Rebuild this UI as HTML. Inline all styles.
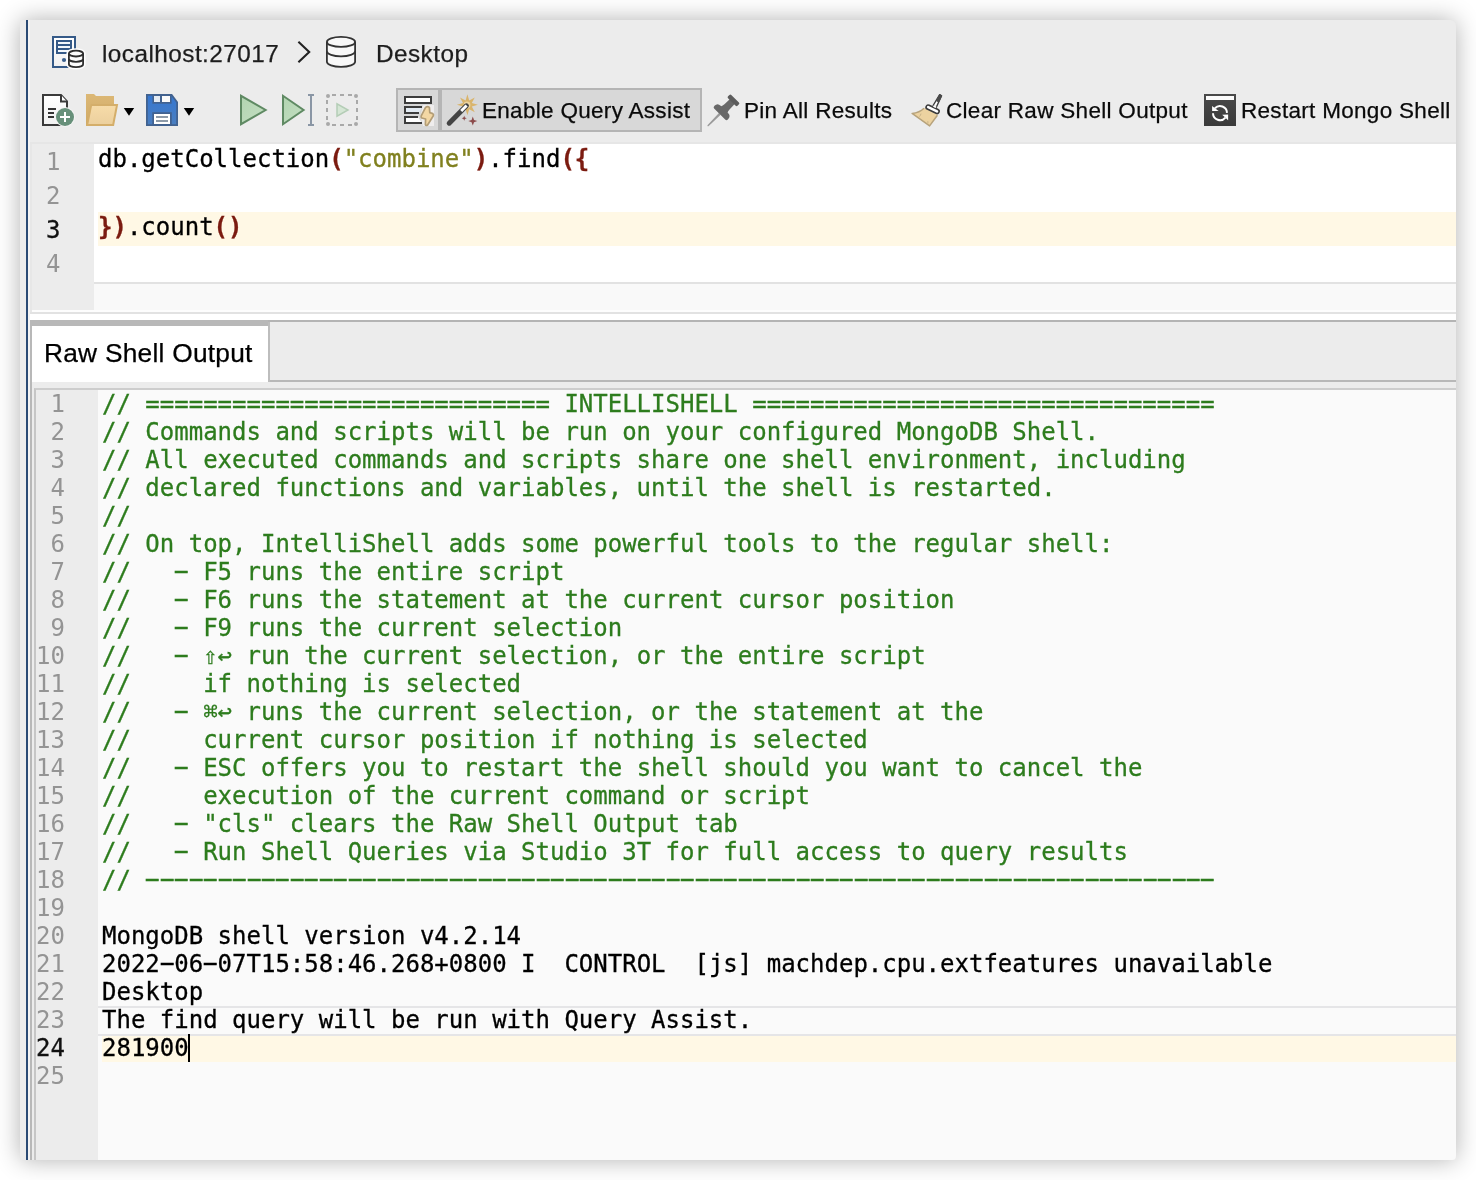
<!DOCTYPE html>
<html lang="en">
<head>
<meta charset="utf-8">
<title>Studio 3T IntelliShell</title>
<style>
*{box-sizing:border-box;margin:0;padding:0}
html,body{width:1476px;height:1180px;background:#fff;overflow:hidden}
body{position:relative;font-family:"Liberation Sans","DejaVu Sans",sans-serif;color:#1b1b1b}
.abs{position:absolute}
#win{position:absolute;left:20px;top:20px;width:1436px;height:1140px;background:#ececec;border-radius:4px 6px 4px 4px;
  box-shadow:0 0 24px rgba(0,0,0,.31);overflow:hidden}
#win{will-change:transform}
#strip{position:absolute;left:0;top:0;width:6px;height:100%;background:#ececec}
#blue{position:absolute;left:6px;top:0;width:2px;height:100%;background:#2a4a74}
.ui{font-size:24.3px;line-height:30px;white-space:nowrap;color:#1d1d1d;letter-spacing:.47px;-webkit-text-stroke:.25px #1d1d1d}
.tb{font-size:22.5px;line-height:30px;white-space:nowrap;color:#0a0a0a;letter-spacing:.3px;-webkit-text-stroke:.25px #0a0a0a}
.mono{font-family:"DejaVu Sans Mono","Liberation Mono",monospace;font-size:24px;white-space:pre;-webkit-text-stroke:.3px}
/* editor */
#edtop{position:absolute;left:10px;top:122px;width:1426px;height:2px;background:#e6e6e6}
#edcode{position:absolute;left:74px;top:124px;width:1362px;height:138px;background:#fff}
#edhl{position:absolute;left:78px;top:192px;width:1358px;height:34px;background:#fff8e5}
#edsep{position:absolute;left:74px;top:262px;width:1362px;height:2px;background:#e2e2e2}
#edbot{position:absolute;left:74px;top:264px;width:1362px;height:26px;background:#f9f9f9}
#edline2{position:absolute;left:12px;top:290px;width:1424px;height:2px;background:#fdfdfd}
#edline3{position:absolute;left:10px;top:292px;width:1426px;height:2px;background:#e2e2e2}
#edwhite{position:absolute;left:10px;top:294px;width:1426px;height:6px;background:#fff}
#edL{position:absolute;left:10px;top:124px;width:2px;height:168px;background:#e7e7e7}
#lite{position:absolute;left:8px;top:0;width:2px;height:100%;background:#f3f3f3}
.eln{position:absolute;left:26px;width:16px;height:34px;line-height:36px;color:#949494;text-align:left;-webkit-text-stroke:0}
.el{position:absolute;left:78px;height:34px;line-height:31px;color:#000}
.br{color:#7b1b10;font-weight:bold}
.st{color:#80801f}
/* tabs */
#tabtop{position:absolute;left:10px;top:300px;width:1426px;height:2px;background:#b4b4b4}
#tabbot{position:absolute;left:248px;top:360px;width:1188px;height:2px;background:#b8b8b8}
#tabL{position:absolute;left:10px;top:300px;width:2px;height:840px;background:#b8b8b8}
#tab{position:absolute;left:12px;top:300px;width:236px;height:62px;background:#fff;border-top:6px solid #b8b8b8}
#tabR{position:absolute;left:248px;top:302px;width:2px;height:60px;background:#bdbdbd}
#tabtxt{position:absolute;left:24px;top:318px;font-size:26.3px;line-height:30px;color:#000;white-space:nowrap;letter-spacing:.25px;-webkit-text-stroke:.25px #000}
/* output */
#out{position:absolute;left:14px;top:368px;width:1422px;height:772px;background:#fafafa;border-left:2px solid #c6c6c6;border-top:2px solid #cdcdcd}
#gut{position:absolute;left:0;top:0;width:62px;height:770px;background:#ececec}
#ohl{position:absolute;left:66px;top:645px;width:1354px;height:27px;background:#fff8e5}
.sep{position:absolute;left:62px;width:1358px;height:2px;background:#e5e5e7}
#lnums{position:absolute;left:0;top:0;width:62px}
#lnums div{height:28px;line-height:28px;color:#949494;-webkit-text-stroke:0;text-align:right;padding-right:33px;letter-spacing:0}
#lines{position:absolute;left:66px;top:0}
#lines div{height:28px;line-height:28px;color:#000}
.c{color:#2d7c1d}
.h{display:inline-block;transform:translateY(-1.4px) scaleX(2.03)}
#caret{position:absolute;left:152px;top:644px;width:2px;height:28px;background:#000}
</style>
</head>
<body>
<div id="win">
  <div id="strip"></div><div id="blue"></div>
  <!-- breadcrumb -->
  <div class="abs ui" style="left:82px;top:19px">localhost:27017</div>
  <div class="abs ui" style="left:356px;top:19px">Desktop</div>
  <!-- toolbar -->
  <div class="abs" style="left:376px;top:68px;width:306px;height:44px;background:#d8d8d8;border:2px solid #b5b5b5"></div><div class="abs" style="left:418px;top:68px;width:4px;height:44px;background:#b5b5b5"></div>
  <div class="abs tb" style="left:462px;top:76px">Enable Query Assist</div>
  <div class="abs tb" style="left:724px;top:76px">Pin All Results</div>
  <div class="abs tb" style="left:926px;top:76px">Clear Raw Shell Output</div>
  <div class="abs tb" style="left:1221px;top:76px">Restart Mongo Shell</div>
  <!-- editor -->
  <div id="edtop"></div><div id="edcode"></div><div id="edhl"></div><div id="edsep"></div><div id="edbot"></div><div id="edline2"></div><div id="edline3"></div><div id="edwhite"></div><div id="edL"></div><div id="lite"></div>
  <div class="eln mono" style="top:124px">1</div>
  <div class="eln mono" style="top:158px">2</div>
  <div class="eln mono" style="top:192px;color:#111;-webkit-text-stroke:.3px">3</div>
  <div class="eln mono" style="top:226px">4</div>
  <div class="el mono" style="top:124px">db.getCollection<span class="br">(</span><span class="st">"combine"</span><span class="br">)</span>.find<span class="br">({</span></div>
  <div class="el mono" style="top:192px"><span class="br">})</span>.count<span class="br">()</span></div>
  <!-- tabs -->
  <div id="tabtop"></div><div id="tabbot"></div><div id="tabL"></div><div id="tab"></div><div id="tabR"></div>
  <div id="tabtxt">Raw Shell Output</div>
  <!-- output -->
  <div id="out">
    <div id="gut"></div>
    <div id="ohl"></div>
    <div class="sep" style="top:616px"></div>
    <div class="sep" style="top:644px"></div>
    <div id="lnums" class="mono"><div>1</div><div>2</div><div>3</div><div>4</div><div>5</div><div>6</div><div>7</div><div>8</div><div>9</div><div>10</div><div>11</div><div>12</div><div>13</div><div>14</div><div>15</div><div>16</div><div>17</div><div>18</div><div>19</div><div>20</div><div>21</div><div>22</div><div>23</div><div style="color:#111;-webkit-text-stroke:.3px">24</div><div>25</div></div>
    <div id="lines" class="mono"><div><span class="c">// ============================ INTELLISHELL ================================</span></div><div><span class="c">// Commands and scripts will be run on your configured MongoDB Shell.</span></div><div><span class="c">// All executed commands and scripts share one shell environment, including</span></div><div><span class="c">// declared functions and variables, until the shell is restarted.</span></div><div><span class="c">//</span></div><div><span class="c">// On top, IntelliShell adds some powerful tools to the regular shell:</span></div><div><span class="c">//   <span class="h">-</span> F5 runs the entire script</span></div><div><span class="c">//   <span class="h">-</span> F6 runs the statement at the current cursor position</span></div><div><span class="c">//   <span class="h">-</span> F9 runs the current selection</span></div><div><span class="c">//   <span class="h">-</span> ⇧↩ run the current selection, or the entire script</span></div><div><span class="c">//     if nothing is selected</span></div><div><span class="c">//   <span class="h">-</span> ⌘↩ runs the current selection, or the statement at the</span></div><div><span class="c">//     current cursor position if nothing is selected</span></div><div><span class="c">//   <span class="h">-</span> ESC offers you to restart the shell should you want to cancel the</span></div><div><span class="c">//     execution of the current command or script</span></div><div><span class="c">//   <span class="h">-</span> "cls" clears the Raw Shell Output tab</span></div><div><span class="c">//   <span class="h">-</span> Run Shell Queries via Studio 3T for full access to query results</span></div><div><span class="c">// <span class="h">-</span><span class="h">-</span><span class="h">-</span><span class="h">-</span><span class="h">-</span><span class="h">-</span><span class="h">-</span><span class="h">-</span><span class="h">-</span><span class="h">-</span><span class="h">-</span><span class="h">-</span><span class="h">-</span><span class="h">-</span><span class="h">-</span><span class="h">-</span><span class="h">-</span><span class="h">-</span><span class="h">-</span><span class="h">-</span><span class="h">-</span><span class="h">-</span><span class="h">-</span><span class="h">-</span><span class="h">-</span><span class="h">-</span><span class="h">-</span><span class="h">-</span><span class="h">-</span><span class="h">-</span><span class="h">-</span><span class="h">-</span><span class="h">-</span><span class="h">-</span><span class="h">-</span><span class="h">-</span><span class="h">-</span><span class="h">-</span><span class="h">-</span><span class="h">-</span><span class="h">-</span><span class="h">-</span><span class="h">-</span><span class="h">-</span><span class="h">-</span><span class="h">-</span><span class="h">-</span><span class="h">-</span><span class="h">-</span><span class="h">-</span><span class="h">-</span><span class="h">-</span><span class="h">-</span><span class="h">-</span><span class="h">-</span><span class="h">-</span><span class="h">-</span><span class="h">-</span><span class="h">-</span><span class="h">-</span><span class="h">-</span><span class="h">-</span><span class="h">-</span><span class="h">-</span><span class="h">-</span><span class="h">-</span><span class="h">-</span><span class="h">-</span><span class="h">-</span><span class="h">-</span><span class="h">-</span><span class="h">-</span><span class="h">-</span><span class="h">-</span></span></div><div>&nbsp;</div><div>MongoDB shell version v4.2.14</div><div>2022<span class="h">-</span>06<span class="h">-</span>07T15:58:46.268+0800 I  CONTROL  [js] machdep.cpu.extfeatures unavailable</div><div>Desktop</div><div>The find query will be run with Query Assist.</div><div>281900</div><div>&nbsp;</div></div>
    <div id="caret"></div>
  </div>
</div>
<svg id="icons" width="1476" height="140" viewBox="0 0 1476 140" style="position:absolute;left:0;top:0">
  <defs>
    <linearGradient id="gDoc" x1="0" y1="0" x2="0" y2="1"><stop offset="0" stop-color="#ffffff"/><stop offset="1" stop-color="#f1f1f1"/></linearGradient>
    <linearGradient id="gFoldB" x1="0" y1="0" x2="0" y2="1"><stop offset="0" stop-color="#dcb876"/><stop offset="1" stop-color="#cfa966"/></linearGradient>
    <linearGradient id="gFoldF" x1="0" y1="0" x2="0" y2="1"><stop offset="0" stop-color="#f6dba8"/><stop offset="1" stop-color="#ecd09e"/></linearGradient>
    <linearGradient id="gSave" x1="0" y1="0" x2="0" y2="1"><stop offset="0" stop-color="#3577d2"/><stop offset="1" stop-color="#4a7ebf"/></linearGradient>
    <linearGradient id="gPlay" x1="0" y1="0" x2="1" y2="1"><stop offset="0" stop-color="#b2d4b1"/><stop offset="1" stop-color="#c4dfc2"/></linearGradient>
    <linearGradient id="gDark" x1="0" y1="0" x2="0" y2="1"><stop offset="0" stop-color="#4a4a4a"/><stop offset="1" stop-color="#3a3a3a"/></linearGradient>
  </defs>
  <!-- server + db icon -->
  <g>
    <rect x="53" y="37" width="22" height="30" fill="url(#gDoc)" stroke="#355a88" stroke-width="2"/>
    <rect x="57" y="41" width="14" height="12" fill="#f3f8fc" stroke="#355a88" stroke-width="2"/>
    <rect x="57" y="44" width="14" height="2" fill="#355a88"/>
    <rect x="57" y="48" width="14" height="2" fill="#355a88"/>
    <circle cx="64" cy="60" r="2.1" fill="#3a5f8c"/>
    <path d="M68.9 53.6 A7.1 2.9 0 0 1 83.1 53.6 V64.2 A7.1 2.9 0 0 1 68.9 64.2 Z" fill="#fdfdfd" stroke="#fdfdfd" stroke-width="5"/>
    <path d="M68.9 53.6 A7.1 2.9 0 0 1 83.1 53.6 V64.2 A7.1 2.9 0 0 1 68.9 64.2 Z" fill="#fcfcfc" stroke="#2e2e2e" stroke-width="1.8"/>
    <path d="M68.9 53.6 A7.1 2.9 0 0 0 83.1 53.6 M68.9 58.9 A7.1 2.9 0 0 0 83.1 58.9" fill="none" stroke="#2e2e2e" stroke-width="1.8"/>
  </g>
  <!-- chevron -->
  <polyline points="298.4,41.8 309.2,52 298.4,62.2" fill="none" stroke="#222" stroke-width="2.1"/>
  <!-- db icon -->
  <g fill="#f8f8f8" stroke="#333" stroke-width="1.8">
    <path d="M326.9 41.9 A14.1 5 0 0 1 355.1 41.9 V61.8 A14.1 5 0 0 1 326.9 61.8 Z"/>
    <path d="M326.9 41.9 A14.1 5 0 0 0 355.1 41.9 M326.9 51.3 A14.1 5 0 0 0 355.1 51.3" fill="none"/>
  </g>
  <!-- new doc -->
  <g>
    <path d="M43 95 H61 L67 101.5 V125 H43 Z" fill="url(#gDoc)" stroke="#3a3a3a" stroke-width="2" stroke-linejoin="miter"/>
    <path d="M61 95 V101.5 H67" fill="#fff" stroke="#3a3a3a" stroke-width="2"/>
    <rect x="48" y="108" width="8" height="2" fill="#333"/>
    <rect x="48" y="112" width="6" height="2" fill="#333"/>
    <rect x="48" y="116" width="6" height="2" fill="#333"/>
    <circle cx="65" cy="117" r="10" fill="#f4f4f4"/>
    <circle cx="65" cy="117" r="9" fill="#67907a"/>
    <rect x="60" y="116" width="10" height="2" fill="#fff"/>
    <rect x="64" y="112" width="2" height="10" fill="#fff"/>
  </g>
  <!-- folder -->
  <g>
    <path d="M86 94 H94 L96 96 H114 V126 H86 Z" fill="url(#gFoldB)"/>
    <path d="M90.8 104 H118.2 L114 126 H86 Z" fill="#d4ae6a"/>
    <path d="M92 106 H115.8 L112.3 124 H88.4 Z" fill="url(#gFoldF)"/>
  </g>
  <polygon points="123.8,108 134.2,108 129,115.8" fill="#000"/>
  <!-- save -->
  <g>
    <path d="M146.9 94.9 H171.6 L177.1 102.2 V125.1 H146.9 Z" fill="url(#gSave)" stroke="#42628f" stroke-width="1.8"/>
    <rect x="152.4" y="94" width="19.2" height="9.7" fill="#42628f"/>
    <rect x="154" y="96" width="6" height="6" fill="#e4ebf3"/>
    <rect x="162" y="96" width="8" height="6" fill="#fafafa"/>
    <rect x="152.3" y="112.2" width="19.5" height="13.8" fill="#42628f"/>
    <rect x="154" y="114" width="16" height="10" fill="#fff"/>
    <rect x="156" y="116" width="12" height="2" fill="#8d9aa8"/>
    <rect x="156" y="120" width="12" height="2" fill="#8d9aa8"/>
  </g>
  <polygon points="183.8,108 194.2,108 189,115.8" fill="#000"/>
  <!-- play -->
  <polygon points="241,95.8 241,124.2 265.6,110" fill="url(#gPlay)" stroke="#5f8a63" stroke-width="2"/>
  <!-- play step -->
  <polygon points="283,95.8 283,124.2 303.6,110" fill="url(#gPlay)" stroke="#5f8a63" stroke-width="2"/>
  <g fill="#8a96a5"><rect x="310" y="94" width="2" height="32"/><rect x="308" y="94" width="6" height="2"/><rect x="308" y="124" width="6" height="2"/></g>
  <!-- dashed box play -->
  <g fill="#a9a9a9">
    <circle cx="328" cy="96" r="2"/><circle cx="356" cy="96" r="2"/><circle cx="328" cy="124" r="2"/><circle cx="356" cy="124" r="2"/>
    <rect x="332" y="94" width="4" height="2"/><rect x="340" y="94" width="4" height="2"/><rect x="348" y="94" width="4" height="2"/>
    <rect x="332" y="124" width="4" height="2"/><rect x="340" y="124" width="4" height="2"/><rect x="348" y="124" width="4" height="2"/>
    <rect x="326" y="100" width="2" height="4"/><rect x="326" y="108" width="2" height="4"/><rect x="326" y="116" width="2" height="4"/>
    <rect x="356" y="100" width="2" height="4"/><rect x="356" y="108" width="2" height="4"/><rect x="356" y="116" width="2" height="4"/>
  </g>
  <polygon points="337,103.8 337,116.2 348,110" fill="#d5e6d5" stroke="#b4cdb6" stroke-width="1.5"/>
  <!-- list + lightning -->
  <g>
    <rect x="405" y="97" width="26" height="6" fill="#fff" stroke="#3d3d3d" stroke-width="2"/>
    <path d="M422 107 H405 V113 H419" fill="#e3ebf3" stroke="#3d3d3d" stroke-width="2"/>
    <path d="M418 117 H405 V123 H422" fill="#fff" stroke="#3d3d3d" stroke-width="2"/>
    <path d="M423 105 H434 V126 H423 L420.5 116 Z" fill="#efeded"/>
    <path d="M425.6 107.4 Q427.5 106 429.4 107.4 L429.8 112.6 L432.8 113.6 Q434 114.8 433.2 116 L427.6 125 Q426 126 425.4 124.6 L425.6 119 L421.8 118 Q420.6 117 421.2 115.8 Z" fill="#f3d7a4" stroke="#b39d76" stroke-width="1.7" stroke-linejoin="round"/>
  </g>
  <!-- wand -->
  <g>
    <polygon fill="#d9b46c" points="467.4,94.3 469.2,100.4 474.8,97.4 471.8,103 477.9,104.8 471.8,106.6 474.8,112.2 469.2,109.2 467.4,115.3 465.6,109.2 460,112.2 463,106.6 456.9,104.8 463,103 460,97.4 465.6,100.4"/>
    <circle cx="467" cy="105" r="3.4" fill="#f1dcae" opacity=".8"/>
    <line x1="449.2" y1="123.2" x2="466.4" y2="105.8" stroke="#444" stroke-width="5" stroke-linecap="round"/>
    <line x1="461.2" y1="111.1" x2="466.6" y2="105.6" stroke="#fff" stroke-width="2.9" stroke-linecap="butt"/>
    <polygon fill="#8b4a4a" points="464.2,115.8 464.9,117.6 466.7,118.3 464.9,119 464.2,120.8 463.5,119 461.7,118.3 463.5,117.6"/>
    <polygon fill="#8b4a4a" points="472.8,116.6 474,119.9 477.3,121.1 474,122.3 472.8,125.6 471.6,122.3 468.3,121.1 471.6,119.9"/>
  </g>
  <!-- pin -->
  <g transform="translate(735.1,98.7) rotate(45)">
    <polygon points="-1.25,21.6 1.25,21.6 0.7,38.4 0,38.9 -0.7,38.4" fill="#9a9a9a"/>
    <path d="M-9.6 19.6 Q-9.6 15.2 -5.2 15.2 L-4.6 15.2 Q-3.6 14 -3.6 11.5 L-3.4 3 L3.4 3 L3.6 11.5 Q3.6 14 4.6 15.2 L5.2 15.2 Q9.6 15.2 9.6 19.6 Q9.6 21.7 8 21.7 L-8 21.7 Q-9.6 21.7 -9.6 19.6 Z" fill="#686868"/>
    <rect x="-6.7" y="0" width="13.4" height="4.6" rx="1.3" fill="#5c5c5c"/>
  </g>
  <!-- broom -->
  <g>
    <path d="M924.2 108 L937.6 114.8 L929.6 125.9 L912.1 113.4 Q919.5 112.6 924.2 108 Z" fill="#ecd2a0"/>
    <path d="M937.4 115.2 L929.6 125.9 L912.1 113.4 Q919.5 112.6 924 108.2" fill="none" stroke="#b7a37c" stroke-width="1.5" stroke-linejoin="round"/>
    <path d="M921 113.6 Q920.6 115.6 919.4 116.6 M927.8 121.2 L928 123.4" stroke="#c9b48a" stroke-width="1" fill="none"/>
    <path d="M939.7 94.7 L933.1 105.5 L936.3 107.2 L941.6 95.8 Z" fill="#fff" stroke="#3a3a3a" stroke-width="1.4" stroke-linejoin="round"/>
    <path d="M939.7 94.7 L941.6 95.8 L938.7 102 L936.2 100.6 Z" fill="#4a4a4a" stroke="#4a4a4a" stroke-width="1" stroke-linejoin="round"/>
    <g transform="translate(932.6,109.3) rotate(26)">
      <rect x="-7" y="-2.1" width="14" height="4.2" rx="2.1" fill="#fff" stroke="#3a3a3a" stroke-width="1.6"/>
    </g>
    <path d="M933.5 105.9 L936 107.2" stroke="#fff" stroke-width="1.8"/>
  </g>
  <!-- restart -->
  <g>
    <rect x="1204" y="94" width="32" height="32" fill="url(#gDark)"/>
    <rect x="1206" y="96" width="28" height="4" fill="#fbfbfb"/>
    <path d="M1214.9 108.3 A7 7 0 0 1 1227 112.9" fill="none" stroke="#fff" stroke-width="2"/>
    <polygon points="1212.1,105.9 1212.1,111 1218.6,111" fill="#fff"/>
    <path d="M1213 113.3 A7 7 0 0 0 1225.4 117.6" fill="none" stroke="#fff" stroke-width="2"/>
    <polygon points="1228.1,114.5 1228.1,120.2 1222.2,114.7" fill="#fff"/>
  </g>
</svg>
</body>
</html>
